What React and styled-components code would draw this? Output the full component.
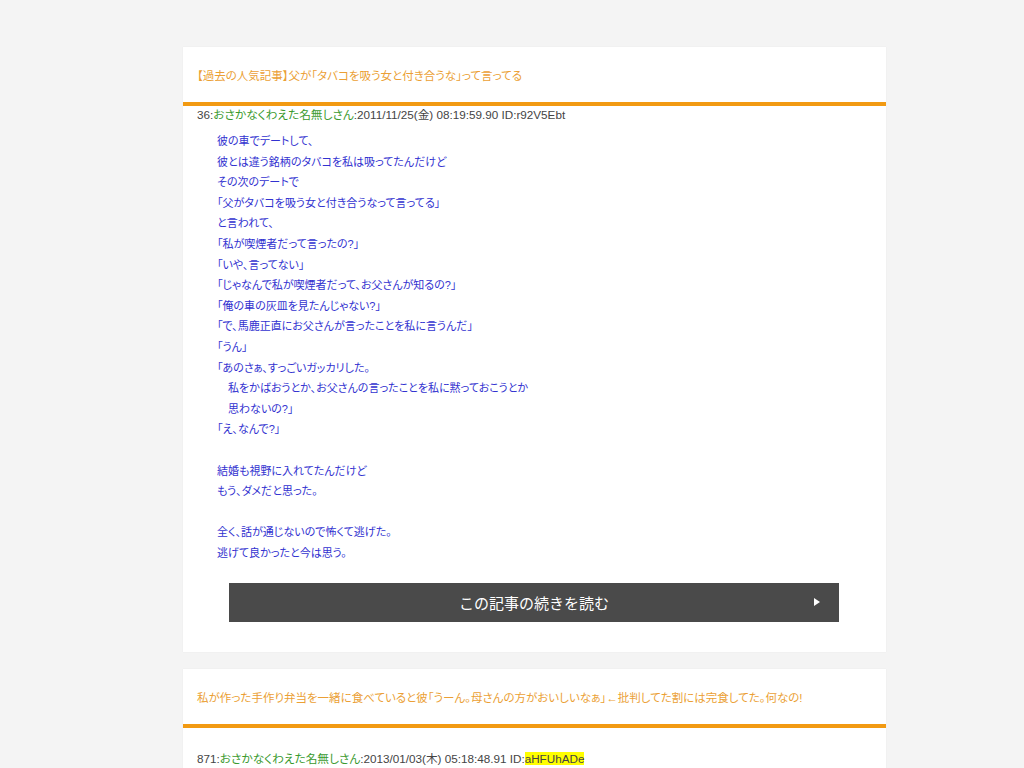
import React from 'react'
import styled, { createGlobalStyle } from 'styled-components'

const GlobalStyle = createGlobalStyle`
  body {
    margin: 0;
    background: #f4f4f4;
    font-family: "Liberation Sans", "Noto Sans CJK JP", sans-serif;
  }
`

const Page = styled.main`
  padding: 47px 0 40px 183px;
  display: flex;
  flex-direction: column;
  gap: 17px;
`

const Card = styled.article`
  width: 703px;
  background: #fff;
  box-shadow: 0 0 1px rgba(0, 0, 0, 0.08);
`

const CardHeader = styled.header`
  height: 55px;
  display: flex;
  align-items: center;
  padding: 0 14px;
  border-bottom: 4px solid #f29a12;
`

const Title = styled.h2`
  margin: 0;
  font-size: 11.5px;
  font-weight: normal;
  color: #eb9f35;
  font-feature-settings: "palt";
`

const Post = styled.section`
  padding: ${p => p.$top}px 14px 30px;
`

const Meta = styled.div`
  font-size: 11.7px;
  line-height: 18px;
  color: #444;
  font-feature-settings: "palt";
`

const Name = styled.span`
  color: #3a9a2e;
`

const Mark = styled.span`
  background: #ffff00;
`

const Body = styled.div`
  margin: 7px 0 0 20px;
  font-size: 11px;
  line-height: 20.6px;
  color: #3232d0;
  font-feature-settings: "palt";
  white-space: pre-line;
`

const MoreButton = styled.a`
  position: relative;
  margin: 20px 33px 0 32px;
  height: 39px;
  display: flex;
  align-items: center;
  justify-content: center;
  background: #4a4a4a;
  color: #fff;
  font-size: 15px;
  text-decoration: none;
  cursor: pointer;
`

const Arrow = styled.span`
  position: absolute;
  right: 19px;
  top: 15px;
  width: 0;
  height: 0;
  border-top: 4.5px solid transparent;
  border-bottom: 4.5px solid transparent;
  border-left: 6px solid #fff;
`

const firstText = `彼の車でデートして、
彼とは違う銘柄のタバコを私は吸ってたんだけど
その次のデートで
「父がタバコを吸う女と付き合うなって言ってる」
と言われて、
「私が喫煙者だって言ったの?」
「いや、言ってない」
「じゃなんで私が喫煙者だって、お父さんが知るの?」
「俺の車の灰皿を見たんじゃない?」
「で、馬鹿正直にお父さんが言ったことを私に言うんだ」
「うん」
「あのさぁ、すっごいガッカリした。
　私をかばおうとか、お父さんの言ったことを私に黙っておこうとか
　思わないの?」
「え、なんで?」

結婚も視野に入れてたんだけど
もう、ダメだと思った。

全く、話が通じないので怖くて逃げた。
逃げて良かったと今は思う。`

export default function App () {
  return (
    <>
      <GlobalStyle />
      <Page>
        <Card>
          <CardHeader>
            <Title>【過去の人気記事】父が「タバコを吸う女と付き合うな」って言ってる</Title>
          </CardHeader>
          <Post $top={0}>
            <Meta>36:<Name>おさかなくわえた名無しさん</Name>:2011/11/25(金) 08:19:59.90 ID:r92V5Ebt</Meta>
            <Body>{firstText}</Body>
            <MoreButton>
              この記事の続きを読む
              <Arrow />
            </MoreButton>
          </Post>
        </Card>
        <Card>
          <CardHeader>
            <Title>私が作った手作り弁当を一緒に食べていると彼「うーん。母さんの方がおいしいなぁ」←批判してた割には完食してた。何なの!</Title>
          </CardHeader>
          <Post $top={22}>
            <Meta>871:<Name>おさかなくわえた名無しさん</Name>:2013/01/03(木) 05:18:48.91 ID:<Mark>aHFUhADe</Mark></Meta>
          </Post>
        </Card>
      </Page>
    </>
  )
}
